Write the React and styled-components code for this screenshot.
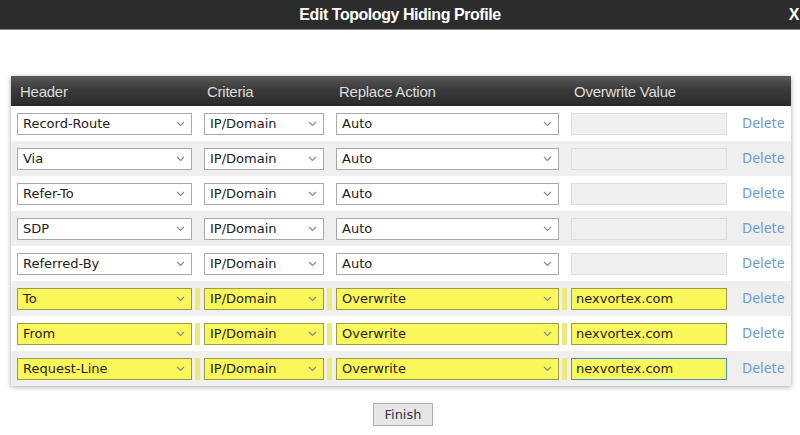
import React from "react";
import styled, { createGlobalStyle } from "styled-components";

const GlobalStyle = createGlobalStyle`
  html, body {
    margin: 0;
    padding: 0;
    background: #ffffff;
  }
  body {
    font-family: "DejaVu Sans", Verdana, sans-serif;
  }
`;

const YELLOW = "#faf75a";

const Page = styled.div`
  width: 800px;
  height: 435px;
  overflow: hidden;
  display: flex;
  flex-direction: column;
`;

const TitleBar = styled.div`
  height: 29px;
  background: #2c2c2c;
  border-bottom: 1px solid #8a8a8a;
  display: flex;
  align-items: center;
  justify-content: center;
  position: relative;
  color: #ffffff;
  font-family: "Liberation Sans", Arial, sans-serif;
  font-weight: bold;
  font-size: 16px;
  letter-spacing: -0.45px;
`;

const Close = styled.span`
  position: absolute;
  right: 1px;
  top: 6px;
  font-size: 16px;
`;

const Panel = styled.div`
  margin: 46px 9px 0 11px;
  box-shadow: 0 1px 5px rgba(0, 0, 0, 0.35);
  background: #ffffff;
`;

const Grid = styled.div`
  display: grid;
  grid-template-columns: 175px 120px 223px 156px 1fr;
  column-gap: 12px;
  padding: 0 0 0 6px;
  align-items: center;
`;

const HeadRow = styled(Grid)`
  height: 30px;
  background: linear-gradient(#5a5a5a, #3a3a3a 45%, #2a2a2a);
  color: #dcdcdc;
  font-family: "Liberation Sans", Arial, sans-serif;
  font-size: 15px;
  letter-spacing: -0.25px;
`;

const HeadCell = styled.div`
  padding-left: 3px;
  padding-top: 1px;
`;

const Row = styled(Grid)`
  height: 35px;
  background: ${(p) => (p.$alt ? "#efefef" : "#ffffff")};
`;

const Field = styled.div`
  height: 22px;
  box-sizing: border-box;
  border: 1px solid ${(p) => (p.$hl ? "#9c9a4e" : "#a9a9a9")};
  background: ${(p) => (p.$hl ? YELLOW : "#ffffff")};
  color: ${(p) => (p.$hl ? "#2a1c00" : "#222222")};
  font-size: 13px;
  display: flex;
  align-items: center;
  justify-content: space-between;
  padding: 0 6px 0 5px;
  box-shadow: ${(p) =>
    p.$hl ? `3px 0 0 0 ${p.$alt ? "#efefef" : "#ffffff"}, 8px 0 0 0 #ecea7a` : "none"};
`;

const TextBox = styled.div`
  height: 22px;
  box-sizing: border-box;
  border: 1px solid
    ${(p) => (p.$focus ? "#4a8fd6" : p.$hl ? "#9c9a4e" : "#dcdcdc")};
  background: ${(p) => (p.$hl ? YELLOW : "#efefef")};
  color: #2a1c00;
  font-size: 13px;
  display: flex;
  align-items: center;
  padding-left: 4px;
`;

const DeleteLink = styled.a`
  font-family: "Noto Sans", "Open Sans", sans-serif;
  font-size: 14px;
  color: #6d9bd6;
  text-decoration: none;
  padding-left: 3px;
  padding-bottom: 2px;
`;

const Footer = styled.div`
  display: flex;
  justify-content: center;
  padding-top: 17px;
  padding-left: 6px;
`;

const Button = styled.button`
  width: 60px;
  height: 23px;
  background: #e6e6e6;
  border: 1px solid #adadad;
  font-family: "DejaVu Sans", Verdana, sans-serif;
  font-size: 13px;
  color: #333344;
  padding: 0;
`;

const Chevron = () => (
  <svg width="9" height="6" viewBox="0 0 9 6">
    <path d="M1 1 L4.5 4.5 L8 1" fill="none" stroke="#8a8a8a" strokeWidth="1.2" />
  </svg>
);

const Select = ({ value, hl, alt }) => (
  <Field $hl={hl} $alt={alt}>
    <span>{value}</span>
    <Chevron />
  </Field>
);

const rows = [
  { header: "Record-Route", action: "Auto" },
  { header: "Via", action: "Auto" },
  { header: "Refer-To", action: "Auto" },
  { header: "SDP", action: "Auto" },
  { header: "Referred-By", action: "Auto" },
  { header: "To", action: "Overwrite", value: "nexvortex.com" },
  { header: "From", action: "Overwrite", value: "nexvortex.com" },
  { header: "Request-Line", action: "Overwrite", value: "nexvortex.com", focus: true },
];

export default function App() {
  return (
    <Page>
      <GlobalStyle />
      <TitleBar>
        Edit Topology Hiding Profile
        <Close>X</Close>
      </TitleBar>
      <Panel>
        <HeadRow>
          <HeadCell>Header</HeadCell>
          <HeadCell>Criteria</HeadCell>
          <HeadCell>Replace Action</HeadCell>
          <HeadCell>Overwrite Value</HeadCell>
          <HeadCell />
        </HeadRow>
        {rows.map((r, i) => {
          const hl = !!r.value;
          const alt = i % 2 === 1;
          return (
            <Row key={r.header} $alt={alt}>
              <Select value={r.header} hl={hl} alt={alt} />
              <Select value="IP/Domain" hl={hl} alt={alt} />
              <Select value={r.action} hl={hl} alt={alt} />
              <TextBox $hl={hl} $focus={r.focus}>
                {r.value || ""}
              </TextBox>
              <DeleteLink href="#">Delete</DeleteLink>
            </Row>
          );
        })}
      </Panel>
      <Footer>
        <Button>Finish</Button>
      </Footer>
    </Page>
  );
}
